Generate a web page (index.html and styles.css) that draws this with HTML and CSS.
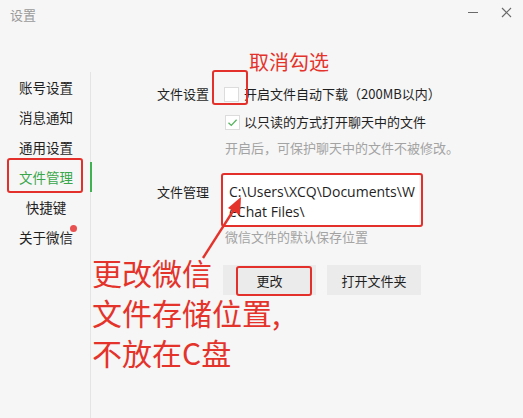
FILE: index.html
```html
<!DOCTYPE html>
<html lang="zh">
<head>
<meta charset="utf-8">
<link rel="stylesheet" href="styles.css">
</head>
<body>
<div class="window">
  <div class="titlebar">
    <span class="title">设置</span>
    <div class="controls">
      <span class="ctl min"></span>
      <svg class="ctl close" width="11" height="11" viewBox="0 0 11 11"><path d="M1 1L10 10M10 1L1 10" stroke="#6a6a6a" stroke-width="1.2" fill="none"/></svg>
    </div>
  </div>
  <div class="content">
    <nav class="sidebar">
      <div class="nav-item">账号设置</div>
      <div class="nav-item">消息通知</div>
      <div class="nav-item">通用设置</div>
      <div class="nav-item active">文件管理</div>
      <div class="nav-item">快捷键</div>
      <div class="nav-item dot">关于微信</div>
    </nav>
    <main class="main">
      <section class="row row-settings">
        <div class="label">文件设置</div>
        <div class="field">
          <label class="opt"><span class="box"></span><span>开启文件自动下载（200MB以内）</span></label>
          <label class="opt opt2"><span class="box checked"><svg width="13" height="13" viewBox="0 0 13 13"><path d="M2.5 6.8L5.3 9.4L10.6 3.8" stroke="#58b45f" stroke-width="1.3" fill="none"/></svg></span><span>以只读的方式打开聊天中的文件</span></label>
          <div class="hint hint1">开启后，可保护聊天中的文件不被修改。</div>
        </div>
      </section>
      <section class="row row-files">
        <div class="label">文件管理</div>
        <div class="field">
          <div class="path">C:\Users\XCQ\Documents\WeChat Files\</div>
          <div class="hint hint2">微信文件的默认保存位置</div>
          <div class="buttons">
            <button class="btn">更改</button>
            <button class="btn">打开文件夹</button>
          </div>
        </div>
      </section>
    </main>
  </div>

  <div class="mark mark-nav"></div>
  <div class="mark mark-check"></div>
  <div class="mark mark-path"></div>
  <div class="mark mark-btn"></div>
  <div class="note note-top">取消勾选</div>
  <div class="note note-big">更改微信<br>文件存储位置,<br>不放在C盘</div>
  <svg class="arrow" width="60" height="80" viewBox="0 0 60 80">
    <line x1="6" y1="70" x2="38" y2="20" stroke="#e4332b" stroke-width="2.4"/>
    <polygon points="44,9 43,27 31,20" fill="#e4332b"/>
  </svg>
</div>
</body>
</html>
```

FILE: styles.css
```css
* { box-sizing: border-box; }
html, body { margin: 0; padding: 0; }
body {
  background: #f6f6f6;
  font-family: "Noto Sans CJK SC", "Noto Sans", sans-serif;
  color: #1f1f1f;
}
.window {
  position: relative;
  width: 523px;
  height: 418px;
  overflow: hidden;
  background: #f6f6f6;
}
.titlebar {
  height: 34px;
  display: flex;
  align-items: flex-start;
  justify-content: space-between;
  padding: 5px 10px 0 10px;
}
.title {
  font-size: 13px;
  color: #9a9a9a;
  line-height: 20px;
}
.controls {
  display: flex;
  align-items: center;
  gap: 23px;
  padding-top: 2px;
  padding-right: 1px;
}
.ctl.min {
  display: block;
  width: 10px;
  height: 1px;
  background: #6a6a6a;
}
.content {
  display: flex;
  height: 384px;
  padding-top: 38px;
}
.sidebar {
  width: 91px;
  border-right: 1px solid #e4e4e4;
  display: flex;
  flex-direction: column;
  padding-top: 0;
}
.nav-item {
  position: relative;
  height: 30px;
  line-height: 30px;
  text-align: center;
  font-size: 13.5px;
  color: #1f1f1f;
  padding-left: 2px;
}
.nav-item.active { color: #3aa64a; }
.nav-item.active::after {
  content: "";
  position: absolute;
  right: -2px;
  top: 0;
  width: 2px;
  height: 30px;
  background: #3fb34f;
}
.nav-item.dot::after {
  content: "";
  position: absolute;
  left: 70px;
  top: 3px;
  width: 7px;
  height: 7px;
  border-radius: 50%;
  background: #e95050;
}
.main {
  flex: 1;
  padding-left: 66px;
}
.row {
  display: grid;
  grid-template-columns: 66px 1fr;
}
.label {
  font-size: 13px;
  line-height: 20px;
}
.row-settings { padding-top: 12px; }
.opt {
  display: flex;
  align-items: center;
  font-size: 13px;
  line-height: 20px;
  gap: 5px;
  margin-left: 1px;
}
.opt2 { margin-top: 8px; margin-left: 2px; gap: 4px; }
.box {
  width: 15px;
  height: 15px;
  background: #fff;
  border: 1px solid #dcdcdc;
  display: flex;
  align-items: center;
  justify-content: center;
}
.hint {
  font-size: 13px;
  line-height: 20px;
  color: #a3a3a3;
}
.hint1 { margin-top: 6px; margin-left: 2px; }
.row-files { margin-top: 17px; }
.row-files .label { padding-top: 7px; }
.path {
  width: 196px;
  height: 50px;
  background: #fff;
  font-family: "Open Sans", "Noto Sans", sans-serif;
  font-size: 14px;
  line-height: 20px;
  padding: 7px 0 0 6px;
  word-break: break-all;
  color: #1f1f1f;
}
.hint2 { margin-top: 2px; margin-left: 2px; }
.buttons {
  display: flex;
  gap: 11px;
  margin-top: 18px;
}
.btn {
  width: 93px;
  height: 30px;
  border: none;
  background: #ebebeb;
  font-family: "Noto Sans CJK SC", sans-serif;
  font-size: 13px;
  color: #1f1f1f;
  padding: 0;
}
.btn + .btn { width: 94px; }

/* annotations */
.mark {
  position: absolute;
  border: 2px solid #e3302a;
  border-radius: 3px;
}
.mark-nav { left: 7px; top: 158px; width: 76px; height: 35px; }
.mark-check { left: 212px; top: 70px; width: 36px; height: 35px; }
.mark-path { left: 221px; top: 173px; width: 202px; height: 54px; }
.mark-btn { left: 236px; top: 266px; width: 76px; height: 30px; }
.note {
  position: absolute;
  color: #e4332b;
}
.note-top {
  left: 249px;
  top: 49px;
  font-size: 20px;
  line-height: 26px;
}
.note-big {
  left: 92px;
  top: 252px;
  font-size: 30px;
  line-height: 40px;
}
.arrow {
  position: absolute;
  left: 197px;
  top: 188px;
}
```
